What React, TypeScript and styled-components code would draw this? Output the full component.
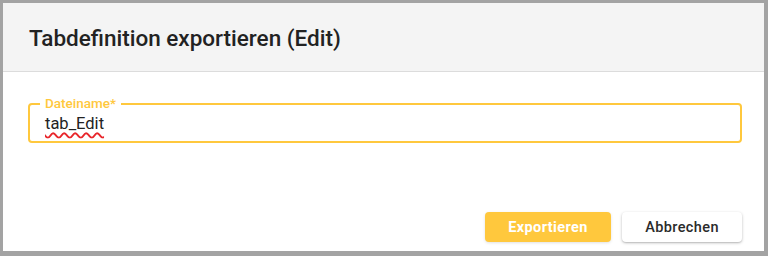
import React from "react";
import styled, { createGlobalStyle } from "styled-components";

const Global = createGlobalStyle`
  html, body { margin: 0; padding: 0; background: #a3a3a3; }
  body { font-family: Roboto, "Liberation Sans", sans-serif; }
  * { box-sizing: border-box; }
`;

const Page = styled.div`
  width: 768px;
  height: 256px;
  padding: 3px 4px 5px 3px;
`;

const Dialog = styled.div`
  width: 761px;
  height: 248px;
  background: #ffffff;
  display: flex;
  flex-direction: column;
`;

const Header = styled.div`
  height: 69px;
  background: #f4f4f4;
  border-bottom: 1px solid #dcdcdc;
  display: flex;
  align-items: center;
  padding-left: 26px;
  padding-top: 2px;
`;

const Title = styled.h2`
  margin: 0;
  font-size: 22.5px;
  font-weight: 500;
  color: #222222;
`;

const Body = styled.div`
  padding: 31px 22px 0 25px;
  flex: 1;
`;

const Field = styled.div`
  height: 40px;
  border: 2px solid #ffc83d;
  border-radius: 4px;
  padding: 0 15px;
  display: flex;
  align-items: center;
  position: relative;
`;

const Label = styled.span`
  position: absolute;
  left: 10px;
  top: -9px;
  padding: 0 5px;
  background: #ffffff;
  font-size: 13.5px;
  font-weight: 500;
  line-height: 15px;
  color: #ffc83d;
`;

const Input = styled.div`
  font-size: 16.5px;
  color: #222222;
  line-height: 18px;
  margin-top: 1px;
`;

const Misspelled = styled.span`
  text-decoration: underline wavy #e8262b;
  text-decoration-thickness: 1.5px;
  text-underline-offset: 3px;
`;

const Actions = styled.div`
  display: flex;
  justify-content: flex-end;
  gap: 11px;
  padding: 0 22px 9px 0;
`;

const Button = styled.button<{ $primary?: boolean }>`
  height: 30px;
  border: none;
  border-radius: 4px;
  font-family: Roboto, "Liberation Sans", sans-serif;
  font-size: 14.5px;
  letter-spacing: 0.4px;
  cursor: pointer;
  width: ${(p) => (p.$primary ? "126px" : "120px")};
  background: ${(p) => (p.$primary ? "#ffc83d" : "#ffffff")};
  color: ${(p) => (p.$primary ? "#ffffff" : "#2a2a2a")};
  font-weight: ${(p) => (p.$primary ? 700 : 500)};
  box-shadow: ${(p) =>
    p.$primary
      ? "0 1px 3px rgba(0,0,0,0.12)"
      : "0 1px 3px rgba(0,0,0,0.25), 0 1px 1px rgba(0,0,0,0.08)"};
`;

export default function App() {
  return (
    <>
      <Global />
      <Page>
        <Dialog>
          <Header>
            <Title>Tabdefinition exportieren (Edit)</Title>
          </Header>
          <Body>
            <Field>
              <Label>Dateiname*</Label>
              <Input>
                <Misspelled>tab_Edit</Misspelled>
              </Input>
            </Field>
          </Body>
          <Actions>
            <Button $primary>Exportieren</Button>
            <Button>Abbrechen</Button>
          </Actions>
        </Dialog>
      </Page>
    </>
  );
}
